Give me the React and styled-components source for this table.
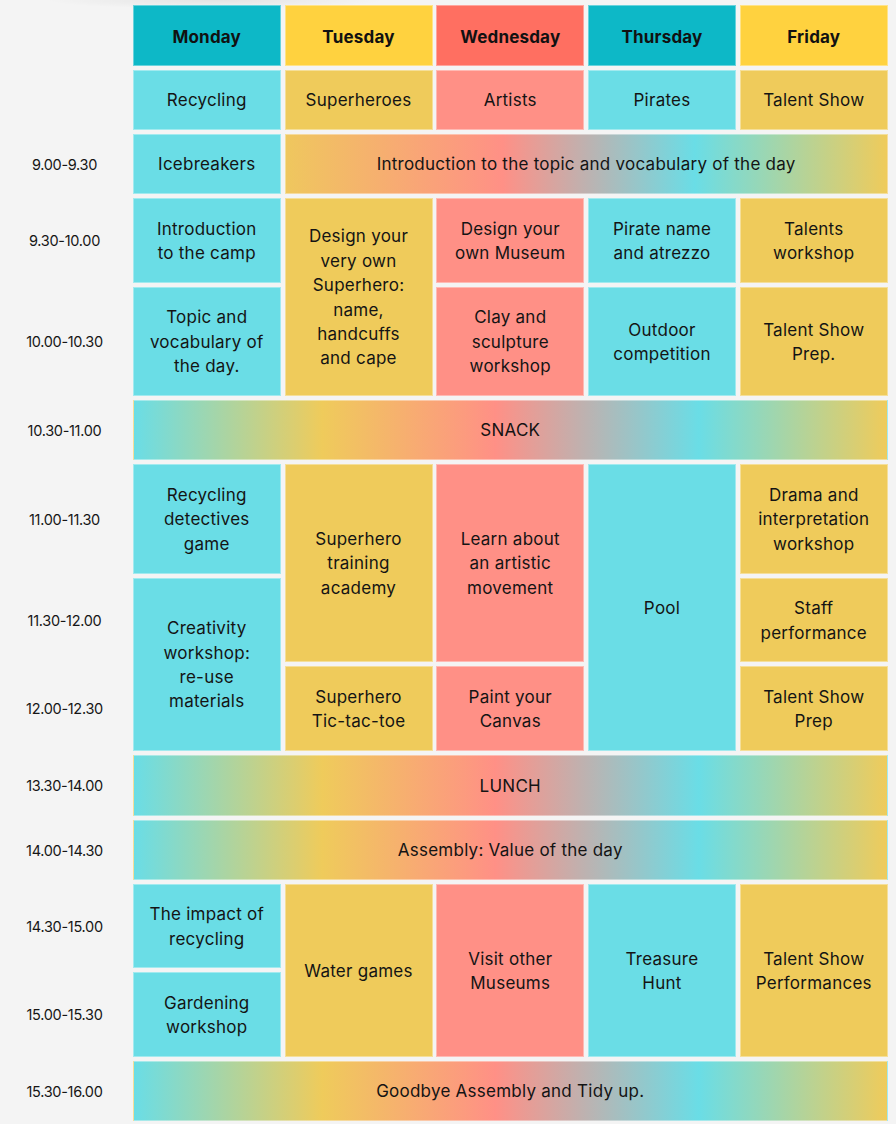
import React from 'react';
import styled, { createGlobalStyle } from 'styled-components';

const GlobalStyle = createGlobalStyle`
  * { box-sizing: border-box; }
  body {
    margin: 0;
    background-color: #f4f4f4;
    background-image: radial-gradient(ellipse 170px 9px at 215px 0, rgba(0, 0, 0, 0.07), transparent);
    background-repeat: no-repeat;
    font-family: Inter, "Liberation Sans", sans-serif;
    color: #141414;
  }
`;

const fills = {
  teal: '#0db8c7',
  gold: '#ffd23f',
  coral: '#ff6f61',
  cyan: '#6adde6',
  yellow: '#efcb5b',
  salmon: '#ff9086',
  full: 'linear-gradient(90deg, #6adde6 0%, #efcb5b 25%, #ff9086 48%, #6adde6 75%, #efcb5b 100%)',
  partial: 'linear-gradient(90deg, #efc75e 0%, #ff9086 36%, #6adde6 68%, #efcb5b 100%)',
};

const days = [
  { name: 'Monday', fill: 'teal' },
  { name: 'Tuesday', fill: 'gold' },
  { name: 'Wednesday', fill: 'coral' },
  { name: 'Thursday', fill: 'teal' },
  { name: 'Friday', fill: 'gold' },
];

const rowHeights = [61, 60, 60, 85, 109, 60, 110, 84, 85, 61, 60, 84, 85, 60];

const times = [
  { row: 3, label: '9.00-9.30' },
  { row: 4, label: '9.30-10.00' },
  { row: 5, label: '10.00-10.30' },
  { row: 6, label: '10.30-11.00' },
  { row: 7, label: '11.00-11.30' },
  { row: 8, label: '11.30-12.00' },
  { row: 9, label: '12.00-12.30' },
  { row: 10, label: '13.30-14.00' },
  { row: 11, label: '14.00-14.30' },
  { row: 12, label: '14.30-15.00' },
  { row: 13, label: '15.00-15.30' },
  { row: 14, label: '15.30-16.00' },
];

// col: 2..6 for Monday..Friday, span = rows covered
const activities = [
  { row: 2, col: 2, fill: 'cyan', text: 'Recycling' },
  { row: 2, col: 3, fill: 'yellow', text: 'Superheroes' },
  { row: 2, col: 4, fill: 'salmon', text: 'Artists' },
  { row: 2, col: 5, fill: 'cyan', text: 'Pirates' },
  { row: 2, col: 6, fill: 'yellow', text: 'Talent Show' },

  { row: 3, col: 2, fill: 'cyan', text: 'Icebreakers' },
  { row: 3, col: 3, cols: 4, fill: 'partial', text: 'Introduction to the topic and vocabulary of the day' },

  { row: 4, col: 2, fill: 'cyan', text: 'Introduction\nto the camp' },
  { row: 4, col: 3, span: 2, fill: 'yellow', text: 'Design your\nvery own\nSuperhero:\nname,\nhandcuffs\nand cape' },
  { row: 4, col: 4, fill: 'salmon', text: 'Design your\nown Museum' },
  { row: 4, col: 5, fill: 'cyan', text: 'Pirate name\nand atrezzo' },
  { row: 4, col: 6, fill: 'yellow', text: 'Talents\nworkshop' },

  { row: 5, col: 2, fill: 'cyan', text: 'Topic and\nvocabulary of\nthe day.' },
  { row: 5, col: 4, fill: 'salmon', text: 'Clay and\nsculpture\nworkshop' },
  { row: 5, col: 5, fill: 'cyan', text: 'Outdoor\ncompetition' },
  { row: 5, col: 6, fill: 'yellow', text: 'Talent Show\nPrep.' },

  { row: 6, col: 2, cols: 5, fill: 'full', text: 'SNACK' },

  { row: 7, col: 2, fill: 'cyan', text: 'Recycling\ndetectives\ngame' },
  { row: 7, col: 3, span: 2, fill: 'yellow', text: 'Superhero\ntraining\nacademy' },
  { row: 7, col: 4, span: 2, fill: 'salmon', text: 'Learn about\nan artistic\nmovement' },
  { row: 7, col: 5, span: 3, fill: 'cyan', text: 'Pool' },
  { row: 7, col: 6, fill: 'yellow', text: 'Drama and\ninterpretation\nworkshop' },

  { row: 8, col: 2, span: 2, fill: 'cyan', text: 'Creativity\nworkshop:\nre-use\nmaterials' },
  { row: 8, col: 6, fill: 'yellow', text: 'Staff\nperformance' },

  { row: 9, col: 3, fill: 'yellow', text: 'Superhero\nTic-tac-toe' },
  { row: 9, col: 4, fill: 'salmon', text: 'Paint your\nCanvas' },
  { row: 9, col: 6, fill: 'yellow', text: 'Talent Show\nPrep' },

  { row: 10, col: 2, cols: 5, fill: 'full', text: 'LUNCH' },
  { row: 11, col: 2, cols: 5, fill: 'full', text: 'Assembly: Value of the day' },

  { row: 12, col: 2, fill: 'cyan', text: 'The impact of\nrecycling' },
  { row: 12, col: 3, span: 2, fill: 'yellow', text: 'Water games' },
  { row: 12, col: 4, span: 2, fill: 'salmon', text: 'Visit other\nMuseums' },
  { row: 12, col: 5, span: 2, fill: 'cyan', text: 'Treasure\nHunt' },
  { row: 12, col: 6, span: 2, fill: 'yellow', text: 'Talent Show\nPerformances' },

  { row: 13, col: 2, fill: 'cyan', text: 'Gardening\nworkshop' },

  { row: 14, col: 2, cols: 5, fill: 'full', text: 'Goodbye Assembly and Tidy up.' },
];

const Schedule = styled.div`
  display: grid;
  grid-template-columns: 129px repeat(5, 148px);
  grid-template-rows: ${(p) => p.$rows.map((h) => `${h}px`).join(' ')};
  column-gap: 3.75px;
  row-gap: 4px;
  padding-top: 5px;
`;

const TimeLabel = styled.div`
  grid-column: 1;
  grid-row: ${(p) => p.$row};
  display: flex;
  align-items: center;
  justify-content: center;
  font-size: 14.5px;
  letter-spacing: -0.3px;
  color: #161616;
`;

const Cell = styled.div`
  grid-column: ${(p) => p.$col} / span ${(p) => p.$cols || 1};
  grid-row: ${(p) => p.$row} / span ${(p) => p.$span || 1};
  display: flex;
  align-items: center;
  justify-content: center;
  text-align: center;
  white-space: pre-line;
  padding: 1px 4px 0;
  background: ${(p) => fills[p.$fill]};
  border: 1px solid rgba(255, 255, 255, 0.38);
  font-size: 17px;
  line-height: 24.4px;
  letter-spacing: 0.25px;
  color: #141414;
`;

const DayHeader = styled(Cell)`
  padding-top: 3px;
  font-weight: 700;
  letter-spacing: 0.2px;
  color: #111;
`;

export default function App() {
  return (
    <>
      <GlobalStyle />
      <Schedule $rows={rowHeights}>
        {days.map((d, i) => (
          <DayHeader key={d.name} $row={1} $col={i + 2} $fill={d.fill}>
            {d.name}
          </DayHeader>
        ))}
        {times.map((t) => (
          <TimeLabel key={t.label} $row={t.row}>
            {t.label}
          </TimeLabel>
        ))}
        {activities.map((a) => (
          <Cell
            key={`${a.row}-${a.col}`}
            $row={a.row}
            $col={a.col}
            $span={a.span}
            $cols={a.cols}
            $fill={a.fill}
          >
            {a.text}
          </Cell>
        ))}
      </Schedule>
    </>
  );
}
